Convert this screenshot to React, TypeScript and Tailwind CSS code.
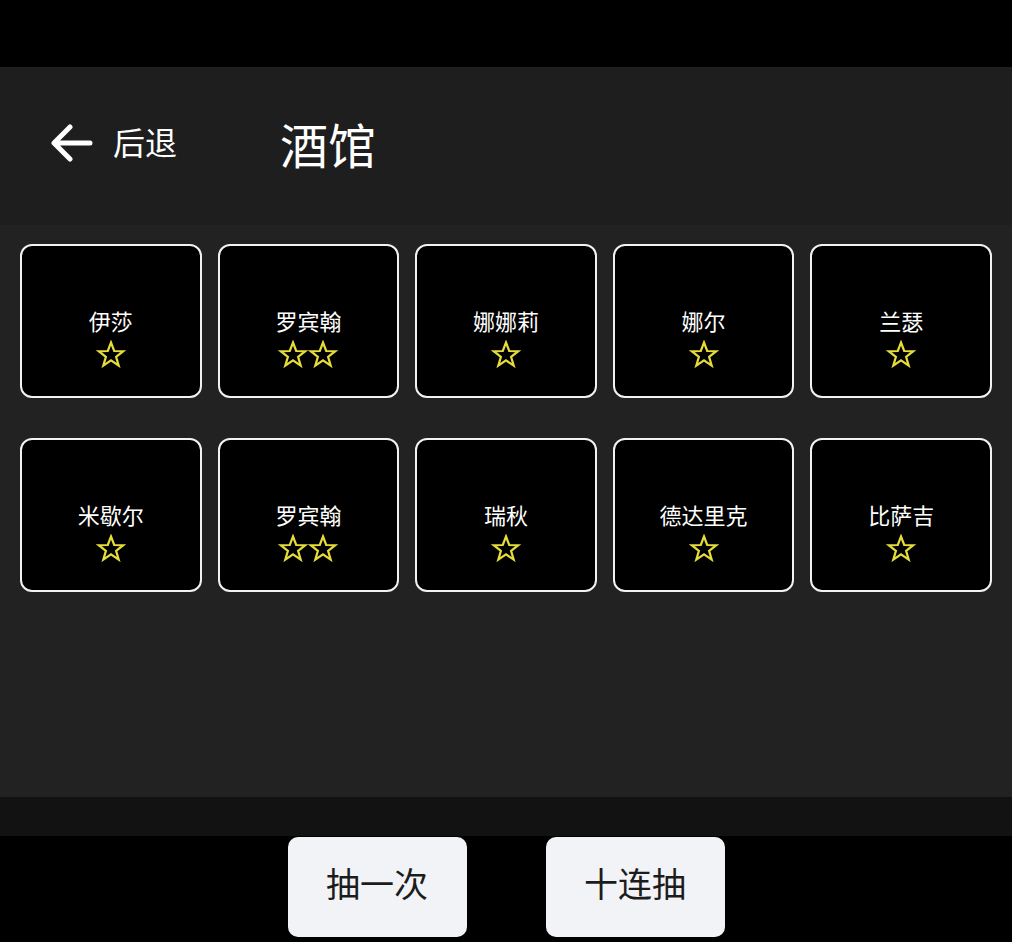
import React from 'react'

type THero = {
  name: string
  stars: number
}

const heroes: THero[] = [
  { name: '伊莎', stars: 1 },
  { name: '罗宾翰', stars: 2 },
  { name: '娜娜莉', stars: 1 },
  { name: '娜尔', stars: 1 },
  { name: '兰瑟', stars: 1 },
  { name: '米歇尔', stars: 1 },
  { name: '罗宾翰', stars: 2 },
  { name: '瑞秋', stars: 1 },
  { name: '德达里克', stars: 1 },
  { name: '比萨吉', stars: 1 },
]

const StarOutline = () => (
  <svg width="30" height="28" viewBox="0 0 30 28" fill="none">
    <path
      d="M15 2.5 L18.2 11 L27.2 11.2 L20.1 16.8 L22.7 25.6 L15 20.4 L7.3 25.6 L9.9 16.8 L2.8 11.2 L11.8 11 Z"
      stroke="#e6dd3b"
      strokeWidth="2.2"
      strokeLinejoin="miter"
    />
  </svg>
)

const BackArrow = () => (
  <svg width="42" height="38" viewBox="0 0 42 38" fill="none">
    <path
      d="M39 19 H4 M19 3 L3 19 L19 35"
      stroke="#ffffff"
      strokeWidth="5"
      strokeLinecap="round"
      strokeLinejoin="round"
    />
  </svg>
)

const HeroCard = ({ name, stars }: THero) => (
  <li className="flex h-[154px] flex-col items-center justify-center rounded-[12px] border-2 border-[#f2f2f2] bg-black pt-[30px]">
    <span className="text-[22px] leading-[30px] text-white">{name}</span>
    <div className="mt-[5px] flex">
      {Array.from({ length: stars }).map((_, i) => (
        <StarOutline key={i} />
      ))}
    </div>
  </li>
)

const App = () => {
  return (
    <div
      className="flex h-[942px] w-full flex-col bg-black"
      style={{ fontFamily: '"Noto Sans CJK SC", "Noto Sans", sans-serif' }}
    >
      <div className="h-[67px] bg-black" />

      <header className="flex h-[158px] items-center bg-[#1e1e1e] pb-[6px]">
        <button className="ml-[51px] flex items-center gap-[20px] text-white">
          <BackArrow />
          <span className="relative -top-[2px] text-[32px] leading-none">后退</span>
        </button>
        <h1 className="ml-[103px] text-[48px] leading-none text-white">酒馆</h1>
      </header>

      <main className="h-[572px] bg-[#222222] px-5 pt-[19px]">
        <ul className="grid grid-cols-5 gap-x-4 gap-y-[40px]">
          {heroes.map((hero, i) => (
            <HeroCard {...hero} key={i} />
          ))}
        </ul>
      </main>

      <div className="h-[39px] bg-[#121212]" />

      <footer className="flex flex-1 items-start justify-center gap-[79px] pt-px">
        <button className="h-[100px] w-[179px] rounded-[10px] bg-[#f2f3f7] pb-[9px] text-[34px] text-[#1c1c1c]">
          抽一次
        </button>
        <button className="h-[100px] w-[179px] rounded-[10px] bg-[#f2f3f7] pb-[9px] text-[34px] text-[#1c1c1c]">
          十连抽
        </button>
      </footer>
    </div>
  )
}

export default App
